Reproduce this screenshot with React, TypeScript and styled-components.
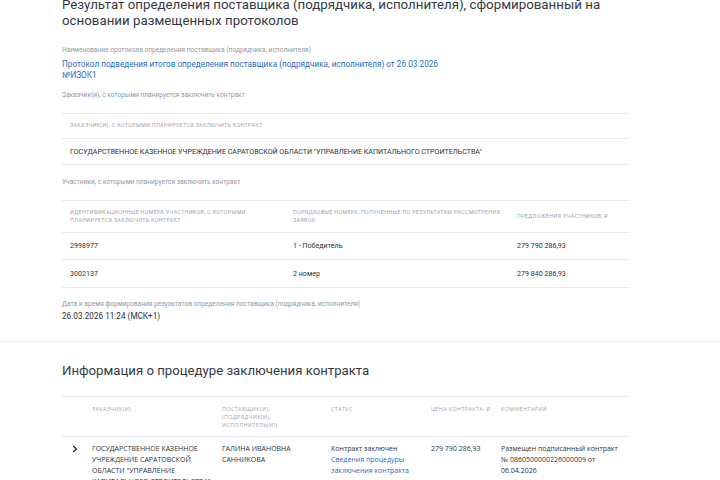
import React from "react";
import styled, { createGlobalStyle } from "styled-components";

const Global = createGlobalStyle`
  html, body { margin: 0; padding: 0; background: #fff; }
  body { font-family: Roboto, "Noto Sans", sans-serif; color: #333; overflow: hidden; }
  * { box-sizing: border-box; }
`;

const Page = styled.div`
  width: 720px;
  height: 480px;
  overflow: hidden;
`;

const Section = styled.section<{ $top?: number }>`
  padding: 0 90px 0 62px;
  margin-top: ${(p) => p.$top ?? 0}px;
`;

const Title = styled.h1`
  margin: -3px 0 0;
  font-size: 13.3px;
  line-height: 16px;
  font-weight: 400;
  color: #333a44;
  white-space: nowrap;
`;

const H2 = styled.h2`
  margin: 0;
  font-size: 13.2px;
  line-height: 16px;
  font-weight: 400;
  color: #333a44;
`;

const Field = styled.div<{ $top: number }>`
  margin-top: ${(p) => p.$top}px;
`;

const Label = styled.div`
  font-size: 6.6px;
  line-height: 9px;
  color: #8f99a5;
`;

const Value = styled.div<{ $link?: boolean; $gap?: number }>`
  margin-top: ${(p) => p.$gap ?? 4}px;
  font-size: 8.2px;
  line-height: 10.5px;
  color: ${(p) => (p.$link ? "#1f6dc0" : "#2d3238")};
`;

const Table = styled.div<{ $cols: string; $top: number }>`
  margin-top: ${(p) => p.$top}px;
  display: grid;
  grid-template-columns: ${(p) => p.$cols};
  border-top: 1px solid #e9ecef;
`;

const HeadCell = styled.div<{ $h: number }>`
  height: ${(p) => p.$h}px;
  display: flex;
  align-items: center;
  padding: 0 4px 0 8px;
  font-size: 5.4px;
  line-height: 7.5px;
  letter-spacing: 0.3px;
  text-transform: uppercase;
  color: #9ea6b0;
  border-bottom: 1px solid #e9ecef;
`;

const Cell = styled.div<{ $h: number }>`
  height: ${(p) => p.$h}px;
  display: flex;
  align-items: center;
  padding: 0 8px;
  font-size: 7.1px;
  line-height: 10px;
  color: #2d3238;
  border-bottom: 1px solid #e9ecef;
`;

const Divider = styled.div`
  margin-top: 19px;
  height: 1px;
  background: #eceef1;
  width: 100%;
`;

const ProcTable = styled.div`
  margin-top: 17px;
  display: grid;
  grid-template-columns: 30px 130px 109px 100px 70px 1fr;
  border-top: 1px solid #e9ecef;
`;

const ProcHead = styled.div`
  height: 40px;
  padding: 8px 8px 0 0;
  font-family: "Open Sans", Roboto, sans-serif;
  font-size: 5.4px;
  line-height: 8px;
  letter-spacing: 0.4px;
  text-transform: uppercase;
  color: #9ea6b0;
  border-bottom: 1px solid #e9ecef;
`;

const ProcCell = styled.div`
  padding: 6px 6px 0 0;
  font-family: "Open Sans", Roboto, sans-serif;
  font-size: 7px;
  line-height: 11px;
  color: #2d3238;
`;

const Chevron = styled.div`
  padding: 8px 0 0 10px;
  line-height: 0;
`;

const Link = styled.span`
  color: #1f6dc0;
`;

export default function App() {
  return (
    <Page>
      <Global />
      <Section>
        <Title>
          Результат определения поставщика (подрядчика, исполнителя), сформированный на
          <br />
          основании размещенных протоколов
        </Title>
        <Field $top={17}>
          <Label>Наименование протокола определения поставщика (подрядчика, исполнителя)</Label>
          <Value $link>
            Протокол подведения итогов определения поставщика (подрядчика, исполнителя) от 26.03.2026
            <br />
            №ИЗОК1
          </Value>
        </Field>
        <Field $top={11}>
          <Label>Заказчик(и), с которыми планируется заключить контракт</Label>
        </Field>
        <Table $cols="1fr" $top={13}>
          <HeadCell $h={25}>Заказчик(и), с которыми планируется заключить контракт</HeadCell>
          <Cell $h={26}>ГОСУДАРСТВЕННОЕ КАЗЕННОЕ УЧРЕЖДЕНИЕ САРАТОВСКОЙ ОБЛАСТИ "УПРАВЛЕНИЕ КАПИТАЛЬНОГО СТРОИТЕЛЬСТВА"</Cell>
        </Table>
        <Field $top={13}>
          <Label>Участники, с которыми планируется заключить контракт</Label>
        </Field>
        <Table $cols="223px 224px 1fr" $top={13}>
          <HeadCell $h={32}>Идентификационные номера участников, с которыми планируется заключить контракт</HeadCell>
          <HeadCell $h={32}>Порядковые номера, полученные по результатам рассмотрения заявок</HeadCell>
          <HeadCell $h={32}>Предложения участников, ₽</HeadCell>
          <Cell $h={27}>2998977</Cell>
          <Cell $h={27}>1 - Победитель</Cell>
          <Cell $h={27}>279 790 286,93</Cell>
          <Cell $h={28}>3002137</Cell>
          <Cell $h={28}>2 номер</Cell>
          <Cell $h={28}>279 840 286,93</Cell>
        </Table>
        <Field $top={12}>
          <Label>Дата и время формирования результатов определения поставщика (подрядчика, исполнителя)</Label>
          <Value $gap={2}>26.03.2026 11:24 (МСК+1)</Value>
        </Field>
      </Section>
      <Divider />
      <Section $top={21}>
        <H2>Информация о процедуре заключения контракта</H2>
        <ProcTable>
          <ProcHead />
          <ProcHead>Заказчик(и)</ProcHead>
          <ProcHead>
            Поставщик(и),
            <br />
            (подрядчик(и),
            <br />
            исполнитель(и))
          </ProcHead>
          <ProcHead>Статус</ProcHead>
          <ProcHead>Цена контракта, ₽</ProcHead>
          <ProcHead>Комментарий</ProcHead>
          <Chevron>
            <svg width="6" height="8" viewBox="0 0 6 8">
              <path d="M1.2 1 L4.4 4 L1.2 7" fill="none" stroke="#333" strokeWidth="1.4" />
            </svg>
          </Chevron>
          <ProcCell>ГОСУДАРСТВЕННОЕ КАЗЕННОЕ УЧРЕЖДЕНИЕ САРАТОВСКОЙ ОБЛАСТИ "УПРАВЛЕНИЕ КАПИТАЛЬНОГО СТРОИТЕЛЬСТВА"</ProcCell>
          <ProcCell>ГАЛИНА ИВАНОВНА САННИКОВА</ProcCell>
          <ProcCell>
            Контракт заключен
            <br />
            <Link>Сведения процедуры заключения контракта</Link>
          </ProcCell>
          <ProcCell>279 790 286,93</ProcCell>
          <ProcCell>Размещен подписанный контракт № 0860500000226000009 от 06.04.2026</ProcCell>
        </ProcTable>
      </Section>
    </Page>
  );
}
